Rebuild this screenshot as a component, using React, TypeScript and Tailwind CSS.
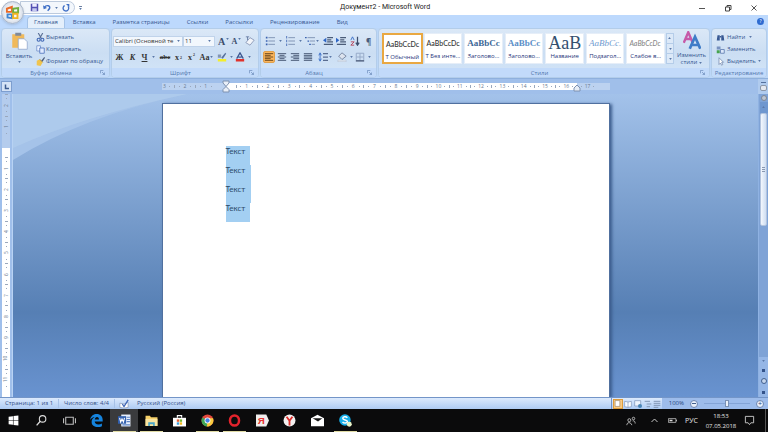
import type { ReactNode } from "react";

type Kids = { children?: ReactNode };

function Icon({ children, className = "h-3 w-3" }: Kids & { className?: string }) {
  return (
    <svg viewBox="0 0 12 12" className={`${className} shrink-0`} fill="none" aria-hidden="true">
      {children}
    </svg>
  );
}

function Caret() {
  return (
    <svg viewBox="0 0 4 3" className="h-[2px] w-[3px] shrink-0" aria-hidden="true">
      <path d="M0 0h4L2 3z" fill="#5a78a8" />
    </svg>
  );
}

function Tool({ label, children, className = "w-[13px]" }: Kids & { label: string; className?: string }) {
  return (
    <button aria-label={label} className={`flex h-3 shrink-0 items-center justify-center gap-px ${className}`}>
      {children}
    </button>
  );
}

function Group({ title, children, className, launcher = true }: Kids & { title: string; className: string; launcher?: boolean }) {
  return (
    <section
      className={`flex flex-col overflow-hidden rounded-sm border border-[#b3cdea] bg-linear-to-b from-[#dbe8f7] via-[#cbdef3] to-[#d3e5f8] ${className}`}
    >
      <div className="flex min-h-0 flex-1">{children}</div>
      <div className="flex h-[9px] items-center bg-[#c2dafa] text-[#5377ad]">
        <h2 className="flex-1 text-center leading-[8px]">{title}</h2>
        {launcher && (
          <button aria-label={`Параметры: ${title}`} className="mr-1 size-[5px]">
            <svg viewBox="0 0 6 6" className="size-[5px]" fill="none" stroke="#7594c0">
              <path d="M.5 4V.5H4M2.500 2.500l3 3M5.500 3v2.500H3" />
            </svg>
          </button>
        )}
      </div>
    </section>
  );
}

const lines = (rows: [number, number][], color = "#4b5c78") => (
  <path d={rows.map(([x, w], i) => `M${x} ${2 + i * 2}h${w}`).join("")} stroke={color} strokeWidth="1.200" />
);

const tabs = ["Вставка", "Разметка страницы", "Ссылки", "Рассылки", "Рецензирование", "Вид"];

const styles = [
  { name: "Т Обычный", sample: "AaBbCcDc", look: "text-[7px] text-[#333]" },
  { name: "Т Без инте...", sample: "AaBbCcDc", look: "text-[7px] text-[#333]" },
  { name: "Заголово...", sample: "AaBbCc", look: "text-[9px] font-bold text-[#3d6797]" },
  { name: "Заголово...", sample: "AaBbCc", look: "text-[9px] text-[#5b8fc8] font-bold" },
  { name: "Название", sample: "AaB", look: "text-[18px] text-[#34506f]" },
  { name: "Подзагол...", sample: "AaBbCc.", look: "text-[9px] italic text-[#6f9bd0]" },
  { name: "Слабое в...", sample: "AaBbCcDc", look: "text-[7px] italic text-[#8a8a8a]" },
];

function TitleBar() {
  return (
    <header className="relative flex h-[15px] items-center bg-white">
      <div className="ml-5 flex h-[13px] w-[55px] items-center gap-1 rounded-r-full border border-[#bccadd] bg-[#f3f7fc] pl-[9px]">
        <button aria-label="Сохранить">
          <Icon className="size-[9px]">
            <path d="M1 1h10v10H1z" fill="#5451b3" />
            <path d="M3 1h6v4H3z" fill="#eef" />
            <path d="M3 7h6v4H3z" fill="#c5c9ee" />
          </Icon>
        </button>
        <button aria-label="Отменить" className="flex items-center gap-1">
          <Icon className="size-2">
            <path d="M2 5c3-4 9-3 8 1-.4 2-2 3-3 4" stroke="#3f6fc6" strokeWidth="2.200" />
            <path d="M0 2l1 6 5-2z" fill="#3f6fc6" />
          </Icon>
          <Caret />
        </button>
        <button aria-label="Повторить">
          <Icon className="size-2">
            <path d="M4 2.500a4.200 4.200 0 1 0 5 1" stroke="#3f6fc6" strokeWidth="2" />
            <path d="M6 0h5v5z" fill="#3f6fc6" />
          </Icon>
        </button>
      </div>
      <button aria-label="Настройка панели" className="ml-1 flex flex-col items-center gap-px">
        <span className="h-px w-[3px] bg-[#6b7fa0]" />
        <Caret />
      </button>
      <h1 className="flex-1 pr-[8px] text-center font-[Roboto,sans-serif] text-[7px] font-normal text-[#222]">Документ2 - Microsoft Word</h1>
      <div className="flex items-center gap-[14px] pr-2">
        <button aria-label="Свернуть">
          <Icon className="size-3"><path d="M3 6.500h6" stroke="#555" /></Icon>
        </button>
        <button aria-label="Восстановить">
          <Icon className="size-3"><path d="M3.500 5h4v4h-4zM5 5V3.500h4v4H7.500" stroke="#444" /></Icon>
        </button>
        <button aria-label="Закрыть">
          <Icon className="size-3"><path d="M3.500 3.500l5 5M8.500 3.500l-5 5" stroke="#555" /></Icon>
        </button>
      </div>
      <button
        aria-label="Кнопка Office"
        className="absolute top-px left-px z-10 flex size-[23px] items-center justify-center rounded-full border border-[#a9b6c9] bg-radial from-white via-[#eceff4] to-[#b9c5d6] shadow"
      >
        <Icon className="size-[15px]">
          <path d="M1.500 3l4-1.500v4h-4z" stroke="#ea6a25" strokeWidth="1.500" />
          <path d="M6.500 3l4-.5v3.500h-4z" stroke="#6fae3c" strokeWidth="1.500" />
          <path d="M2 7.500h3.500v3L2 10z" stroke="#4186d0" strokeWidth="1.500" />
          <path d="M6.500 7h3.500v3.500H6.500z" stroke="#f0b322" strokeWidth="1.500" />
        </Icon>
      </button>
    </header>
  );
}

function TabRow() {
  return (
    <nav className="flex h-[13px] items-end bg-[#bdd9fd] pr-1 pl-[27px] text-[#355690]">
      <button className="h-3 rounded-t-sm border-x border-t border-[#a5c3e8] bg-[#e4effb] px-[6px]">Главная</button>
      <div className="flex flex-1 items-center gap-[17px] pl-2">
        {tabs.map((t) => (
          <button key={t} className="h-3">{t}</button>
        ))}
      </div>
      <button aria-label="Справка" className="mb-[3px] flex size-[7px] items-center justify-center rounded-full bg-[#2f6bd0] text-[5px] text-white">?</button>
    </nav>
  );
}

function Clipboard() {
  return (
    <Group title="Буфер обмена" className="w-[109px]">
      <button className="flex w-[34px] flex-col items-center pt-[3px]">
        <Icon className="size-[18px]">
          <path d="M1.500 1.500h8v9h-8z" fill="#f0b95a" />
          <path d="M3.500.500h4v2h-4z" fill="#7f8a9b" />
          <path d="M5.500 4.500h4l2 2v5h-6z" fill="#fff" stroke="#8ba3c9" strokeWidth=".5" />
        </Icon>
        <span className="mt-[2px] mb-px leading-[8px]">Вставить</span>
        <Caret />
      </button>
      <div className="flex flex-col pt-[2px]">
        <button className="flex h-3 items-center gap-px">
          <Icon className="size-[9px]">
            <path d="M3 0l4 7M9 0L5 7" stroke="#5a6f95" strokeWidth="1.500" />
            <circle cx="3.500" cy="9" r="2" stroke="#4168b5" strokeWidth="1.500" />
            <circle cx="8.500" cy="9" r="2" stroke="#4168b5" strokeWidth="1.500" />
          </Icon>
          Вырезать
        </button>
        <button className="flex h-3 items-center gap-px">
          <Icon className="size-[9px]">
            <path d="M1 1h5v7H1z" fill="#e9f1ff" stroke="#6b8cc8" />
            <path d="M5 4h6v7H5z" fill="#dfeaff" stroke="#4168b5" />
          </Icon>
          Копировать
        </button>
        <button className="flex h-3 items-center gap-px">
          <Icon className="size-[9px]">
            <path d="M7 5l4-5 1 1-3 5z" fill="#4d5d7b" />
            <path d="M1 5l4-2 4 4-3 5-5-1z" fill="#f0c44e" />
            <path d="M5 3l4 4" stroke="#7c6b3c" />
          </Icon>
          Формат по образцу
        </button>
      </div>
    </Group>
  );
}

function FontGroup() {
  return (
    <Group title="Шрифт" className="w-[148px]">
      <div className="flex flex-col gap-1 pt-[6px] pl-px">
        <div className="flex h-3 items-center">
          <div className="flex h-[11px] w-[70px] items-center border border-[#c0d3ea] bg-[#f2f7fd] pr-[2px]">
            <select aria-label="Шрифт" className="w-full min-w-0 appearance-none overflow-hidden pl-px text-[6px] leading-[9px] whitespace-nowrap text-[#333]">
              <option>Calibri (Основной те</option>
            </select>
            <Caret />
          </div>
          <div className="flex h-[11px] w-[32px] items-center border border-[#c0d3ea] bg-[#f2f7fd] pr-[3px]">
            <select aria-label="Размер шрифта" className="w-full min-w-0 appearance-none pl-px text-[6px] leading-[9px] text-[#333]">
              <option>11</option>
            </select>
            <Caret />
          </div>
          <Tool label="Увеличить размер" className="ml-[2px] w-[13px]">
            <span className="font-['Liberation_Serif',serif] text-[10px] font-bold text-[#3c4d6b]">A</span>
            <span className="mb-1"><Caret /></span>
          </Tool>
          <Tool label="Уменьшить размер">
            <span className="font-['Liberation_Serif',serif] text-[8px] font-bold text-[#3c4d6b]">A</span>
            <span className="mb-1"><Caret /></span>
          </Tool>
          <Tool label="Очистить формат" className="w-[14px]">
            <Icon className="size-[10px]">
              <path d="M1 8l5-6 5 3-5 6z" fill="#f3f5fa" stroke="#8493b3" />
              <path d="M1 1h4M3 1v4" stroke="#60769f" />
            </Icon>
          </Tool>
        </div>
        <div className="flex h-3 items-center font-['Liberation_Serif',serif] text-[8px] font-bold text-[#333]">
          <Tool label="Полужирный">Ж</Tool>
          <Tool label="Курсив"><i>К</i></Tool>
          <Tool label="Подчеркнутый" className="w-[19px]"><u>Ч</u><span className="pl-1"><Caret /></span></Tool>
          <Tool label="Зачеркнутый" className="w-[14px]"><s className="text-[7px]">abc</s></Tool>
          <Tool label="Подстрочный">x<sub className="text-[4px]">2</sub></Tool>
          <Tool label="Надстрочный">x<sup className="text-[4px]">2</sup></Tool>
          <Tool label="Регистр" className="w-[17px]">Aa<Caret /></Tool>
          <Tool label="Цвет выделения" className="w-[19px]">
            <Icon className="size-[10px]">
              <path d="M1 8.500h10v3H1z" fill="#f4ee2a" />
              <path d="M5 7l5-6 1 1-4 6z" fill="#56719d" />
              <path d="M1 3h4v4H1z" fill="#8296b5" />
            </Icon>
            <span className="pl-[2px]"><Caret /></span>
          </Tool>
          <Tool label="Цвет текста" className="w-[18px]">
            <Icon className="size-[10px]">
              <path d="M2 8L6 1l4 7M4 6h4" stroke="#3b5690" strokeWidth="1.500" />
              <path d="M1 8.500h10v3H1z" fill="#e0322c" />
            </Icon>
            <span className="pl-[2px]"><Caret /></span>
          </Tool>
        </div>
      </div>
    </Group>
  );
}

function Paragraph() {
  return (
    <Group title="Абзац" className="w-[117px]">
      <div className="flex flex-col gap-1 pt-[6px] pl-[2px]">
        <div className="flex h-3 items-center">
          <Tool label="Маркеры" className="w-[20px]">
            <Icon className="size-[10px]">
              <path d="M4 2h8M4 6h8M4 10h8" stroke="#7388ab" />
              <path d="M1 2h2M1 6h2M1 10h2" stroke="#3a62b0" strokeWidth="2" />
            </Icon>
            <span className="pl-[3px]"><Caret /></span>
          </Tool>
          <Tool label="Нумерация" className="w-[20px]">
            <Icon className="size-[10px]">
              <path d="M4 2h8M4 6h8M4 10h8" stroke="#7388ab" />
              <path d="M2 0v12" stroke="#3a62b0" strokeDasharray="3 1.500" />
            </Icon>
            <span className="pl-[3px]"><Caret /></span>
          </Tool>
          <Tool label="Многоуровневый список" className="w-[18px]">
            <Icon className="size-[10px]">
              <path d="M3 2h9M6 6h6M8 10h4" stroke="#7388ab" />
              <path d="M0 2h2M3 6h2M5 10h2" stroke="#3a62b0" strokeWidth="1.500" />
            </Icon>
            <Caret />
          </Tool>
          <Tool label="Уменьшить отступ">
            <Icon className="size-[10px]">
              <path d="M5 2h7M5 4.500h5M5 7h7M1 10h11" stroke="#4b5c78" strokeWidth="1.500" />
              <path d="M0 5l4-3v6z" fill="#2f66c4" />
            </Icon>
          </Tool>
          <Tool label="Увеличить отступ">
            <Icon className="size-[10px]">
              <path d="M5 2h7M5 4.500h5M5 7h7M1 10h11" stroke="#4b5c78" strokeWidth="1.500" />
              <path d="M4 5L0 2v6z" fill="#2f66c4" />
            </Icon>
          </Tool>
          <Tool label="Сортировка" className="w-[15px]">
            <Icon className="size-[10px]">
              <path d="M1 5l2-4 2 4" stroke="#2f66c4" />
              <path d="M1 7h4l-4 4h4" stroke="#b2364c" />
              <path d="M9 1v9M7 8l2 3 2-3" stroke="#3d4d6c" strokeWidth="1.500" />
            </Icon>
          </Tool>
          <Tool label="Непечатаемые знаки">
            <span className="text-[8px] font-bold text-[#4a5c80]">¶</span>
          </Tool>
        </div>
        <div className="flex h-3 items-center">
          <button aria-label="По левому краю" className="flex size-[12px] items-center justify-center rounded-xs border border-[#dfa04c] bg-[#fcb65d]">
            <Icon className="size-[10px]">{lines([[1, 10], [1, 7], [1, 10], [1, 7], [1, 10]], "#704c20")}</Icon>
          </button>
          <Tool label="По центру"><Icon className="size-[10px]">{lines([[1, 10], [3, 6], [1, 10], [3, 6], [1, 10]])}</Icon></Tool>
          <Tool label="По правому краю"><Icon className="size-[10px]">{lines([[1, 10], [4, 7], [1, 10], [4, 7], [1, 10]])}</Icon></Tool>
          <Tool label="По ширине"><Icon className="size-[10px]">{lines([[1, 10], [1, 10], [1, 10], [1, 10], [1, 10]])}</Icon></Tool>
          <Tool label="Интервал" className="w-[21px]">
            <Icon className="size-[10px]">
              <path d="M6 2h6M6 6h6M6 10h6" stroke="#5a6d90" strokeWidth="1.500" />
              <path d="M2.500 2v8M1 4l1.500-3L4 4M1 8l1.500 3L4 8" stroke="#2f66c4" />
            </Icon>
            <Caret />
          </Tool>
          <Tool label="Заливка" className="w-[19px]">
            <Icon className="size-[10px]">
              <path d="M2 5l4-4 5 4-5 4z" fill="#dce3ee" stroke="#6b7b98" />
              <path d="M1 10h10v1.500H1z" fill="#fff" stroke="#9aa8c0" strokeWidth=".5" />
            </Icon>
            <span className="pl-[2px]"><Caret /></span>
          </Tool>
          <Tool label="Границы" className="w-[18px]">
            <Icon className="size-[10px]">
              <path d="M1.500 1.500h9v8M1.500 1.500v8M6 2v8M2 6h8" stroke="#8fa2c2" />
              <path d="M1 10.500h10" stroke="#3d4d6c" strokeWidth="1.500" />
            </Icon>
            <span className="pl-[2px]"><Caret /></span>
          </Tool>
        </div>
      </div>
    </Group>
  );
}

function Gallery() {
  return (
    <Group title="Стили" className="min-w-0 flex-1">
      <div className="flex min-w-0 flex-1 items-start pt-1 pl-[3px]">
        {styles.map((s, i) => (
          <button
            key={i}
            className={`flex h-[31px] min-w-0 flex-1 flex-col items-center overflow-hidden bg-white whitespace-nowrap ${
              i === 0 ? "border-2 border-[#e9a842]" : "mx-px border border-[#e6eef8]"
            }`}
          >
            <span
              className={`flex h-[18px] w-full items-center overflow-hidden pl-[2px] ${
                i >= 2 && i <= 5 ? "font-['Liberation_Serif',serif]" : "font-[Lato,sans-serif]"
              } ${s.look}`}
            >
              {s.sample}
            </span>
            <span className="text-[6px] leading-[9px] text-[#26347a]">{s.name}</span>
          </button>
        ))}
        <div className="flex h-[31px] w-2 flex-col border border-[#b5cde9] bg-[#dce9f8]">
          <button aria-label="Вверх" className="flex flex-1 rotate-180 items-center justify-center"><Caret /></button>
          <button aria-label="Вниз" className="flex flex-1 items-center justify-center border-y border-[#b5cde9]"><Caret /></button>
          <button aria-label="Все стили" className="flex flex-1 items-center justify-center"><Caret /></button>
        </div>
      </div>
      <button className="flex w-[35px] flex-col items-center pt-[2px]">
        <Icon className="h-[19px] w-[18px]">
          <path d="M.5 7.500L3.500.500l3 7M1.500 5h4" stroke="#c65aa8" strokeWidth="1.600" />
          <path d="M4.500 11.500l3.500-8 3.500 8M6 9h4.500" stroke="#3f7cc8" strokeWidth="1.800" />
        </Icon>
        <span className="pt-[2px] leading-[7px]">Изменить</span>
        <span className="flex items-center gap-[2px] leading-[7px]">стили<Caret /></span>
      </button>
    </Group>
  );
}

function Editing() {
  return (
    <Group title="Редактирование" className="w-[56px]" launcher={false}>
      <div className="flex flex-col pt-[2px] pl-1">
        <button className="flex h-3 items-center gap-[2px]">
          <Icon className="size-[9px]">
            <path d="M1 10l1-7h3v7zM7 10V3h3l1 7z" fill="#395a94" />
            <path d="M5 5h2" stroke="#395a94" strokeWidth="2" />
          </Icon>
          Найти<span className="pl-[2px]"><Caret /></span>
        </button>
        <button className="flex h-3 items-center gap-[2px]">
          <Icon className="size-[9px]">
            <path d="M1 2h5v4H1z" fill="#7992c0" />
            <path d="M6 6h5v5H6z" fill="#dce8fb" stroke="#5372a8" />
            <path d="M1 7h4v4H1z" fill="#46a34e" />
          </Icon>
          Заменить
        </button>
        <button className="flex h-3 items-center gap-[2px]">
          <Icon className="size-[9px]">
            <path d="M4 1v9l2-2 1.500 3 1.500-1-1.500-3H10z" fill="#fff" stroke="#7085ac" />
          </Icon>
          Выделить<Caret />
        </button>
      </div>
    </Group>
  );
}

function Tick({ n, vertical = false }: { n?: number; vertical?: boolean }) {
  return (
    <span className={`flex flex-1 items-center justify-between text-[5px] leading-[5px] text-[#68788f] ${vertical ? "flex-col" : ""}`}>
      <i className={vertical ? "h-px w-[3px] bg-[#9aa8bd]" : "h-[3px] w-px bg-[#9aa8bd]"} />
      <i className="size-px bg-[#9aa8bd]" />
      <span className={vertical ? "-rotate-90" : ""}>{n}</span>
      <i className="size-px bg-[#9aa8bd]" />
      <i />
    </span>
  );
}

function Ruler() {
  return (
    <div className="flex h-[15px] items-center bg-[#a0bfea]">
      <div className="flex h-[15px] w-[13px] items-center justify-center">
        <button aria-label="Табуляция" className="flex size-[11px] items-center justify-center border border-[#7d9ecf] bg-[#d5e3f6]">
          <Icon className="size-[6px]"><path d="M3 1v8h7" stroke="#3d5c90" strokeWidth="3" /></Icon>
        </button>
      </div>
      <div className="flex flex-1 justify-center">
        <div className="flex h-[7px] w-[448px]">
          <div className="flex w-[64px] justify-end overflow-hidden bg-[#bcd2f0] pr-[10px]">
            <div className="flex w-[62px] shrink-0">
              {[3, 2, 1].map((n) => <Tick key={n} n={n} />)}
            </div>
          </div>
          <div className="relative flex w-[351px] bg-white pl-[10px]">
            {Array.from({ length: 16 }, (_, i) => <Tick key={i} n={i + 1} />)}
            <svg viewBox="0 0 8 12" className="absolute -top-[3px] -left-1 h-[13px] w-2" fill="#e8eef7" stroke="#7f92b0" aria-hidden="true">
              <path d="M1 .5h6v2L4 6 1 2.500zM4 6l3 3v2.500H1V9z" />
            </svg>
            <svg viewBox="0 0 8 7" className="absolute top-[1px] -right-1 h-[8px] w-2" fill="#e8eef7" stroke="#7f92b0" aria-hidden="true">
              <path d="M4 .5l3 3v3H1v-3z" />
            </svg>
          </div>
          <div className="flex flex-1 bg-[#bcd2f0] pr-[12px]">
            <Tick n={17} />
          </div>
        </div>
      </div>
      <div className="flex h-[15px] w-[10px] flex-col items-center justify-end gap-[2px] bg-[#b0cbee]">
        <i className="h-px w-[5px] bg-[#54709c]" />
        <button aria-label="Линейка" className="h-[6px] w-[7px] rounded-xs border border-[#8b97a9] bg-[#e4e8ef]" />
        <i className="h-px" />
      </div>
    </div>
  );
}

const textRows = ["w-6", "w-[25px]", "w-[25px]", "w-6"];

function Workspace() {
  return (
    <main className="relative flex min-h-0 flex-1 overflow-hidden bg-linear-to-b from-[#a3c2ea] via-[#567fb4] via-72% to-[#6993d0]">
      <svg viewBox="0 0 190 66" className="absolute top-0 left-[13px] h-[66px] w-[190px]" aria-hidden="true">
        <path d="M0 0h174Q70 22 0 66z" fill="#a5c3e9" />
        <path d="M0 0h174Q70 22 0 54z" fill="#b0ccec" fillOpacity=".75" />
      </svg>
      <div className="relative flex w-[13px] justify-center border-r border-[#b8d2f3] bg-[#9fbfeb]">
        <div className="flex w-2 flex-col">
          <div className="flex h-[54px] flex-col bg-[#b4cced] pb-[11px]">
            {[2, 1].map((n) => <Tick key={n} n={n} vertical />)}
          </div>
          <div className="flex flex-1 flex-col bg-white pt-[9px] pb-[7px]">
            {Array.from({ length: 11 }, (_, i) => <Tick key={i} n={i + 1} vertical />)}
          </div>
        </div>
      </div>
      <div className="relative flex min-w-0 flex-1 justify-center pt-[9px]">
        <article className="w-[448px] border border-b-0 border-[#50709f] bg-white px-[63px] pt-[42px] font-[Lato,sans-serif] text-[8px] leading-[11px] font-normal text-[#2b4a68] shadow-[2px_1px_3px_#3b5c8c]">
          {textRows.map((w, i) => (
            <p key={i} className={`h-[19px] bg-[#a3cff2] ${w}`}>Текст</p>
          ))}
        </article>
      </div>
      <div className="relative flex w-[10px] flex-col items-center border-l border-[#8fb2e2] bg-[#7fa3d6]">
        <button aria-label="Выбор объекта" className="my-[1px] size-[6px] shrink-0 rounded-full border border-[#7d8796] bg-[#bdc5d0]" />
        <button aria-label="Прокрутка вверх" className="flex h-[11px] w-2 shrink-0 rotate-180 items-center justify-center bg-[#6f97cf]"><Caret /></button>
        <div className="flex h-[113px] w-[7px] shrink-0 flex-col items-center justify-center gap-px rounded-xs border border-[#b3c4de] bg-linear-to-r from-[#f3f7fd] to-[#cfdef2]">
          <i className="h-px w-[3px] bg-[#8a98b0]" />
          <i className="h-px w-[3px] bg-[#8a98b0]" />
          <i className="h-px w-[3px] bg-[#8a98b0]" />
        </div>
        <div className="flex-1" />
        <div className="flex h-10 w-full flex-col items-center justify-between bg-[#95b6e6] py-[3px]">
          <button aria-label="Прокрутка вниз"><Caret /></button>
          <button aria-label="Предыдущая страница" className="h-[3px] w-[3px] bg-[#34538a]" />
          <button aria-label="Объект перехода" className="size-[6px] rounded-full border border-[#42608f] bg-[#c5d5ec]" />
          <button aria-label="Следующая страница" className="h-[3px] w-[3px] bg-[#34538a]" />
        </div>
      </div>
    </main>
  );
}

function StatusBar() {
  return (
    <footer className="flex h-3 items-center border-t border-[#7395c8] bg-linear-to-b from-[#dceafd] to-[#aecbf3] text-[#355088]">
      <span className="w-[59px] border-r border-[#a7c2e8] pl-[5px] leading-[9px]">Страница: 1 из 1</span>
      <span className="w-[56px] border-r border-[#a7c2e8] pl-[5px] leading-[9px]">Число слов: 4/4</span>
      <button aria-label="Правописание" className="pr-2 pl-1">
        <Icon className="size-[10px]">
          <path d="M1 5l5 1 5-2v6l-5 1-5-1z" fill="#fff" stroke="#90a3c2" />
          <path d="M4 6l2 3 5-8" stroke="#3f67b8" strokeWidth="1.500" />
        </Icon>
      </button>
      <span className="flex-1 leading-[9px]">Русский (Россия)</span>
      <div className="flex h-full w-[51px] items-center justify-around border-l border-[#7395c8]">
        <button aria-label="Разметка страницы" className="flex size-[10px] items-center justify-center border border-[#dd9c3d] bg-[#fbca80]">
          <Icon className="size-[7px]"><path d="M2 1h8v10H2z" fill="#fff" stroke="#8b7a62" /></Icon>
        </button>
        <button aria-label="Режим чтения"><Icon className="size-2"><path d="M1 2l5 1 5-1v8l-5 1-5-1zM6 3v8" fill="#fff" stroke="#7890b5" /></Icon></button>
        <button aria-label="Веб-документ"><Icon className="size-2"><path d="M1 1h9v8H1z" fill="#eef4fd" stroke="#7890b5" /><circle cx="9" cy="9" r="3" fill="#4a86b8" /></Icon></button>
        <button aria-label="Структура"><Icon className="size-2"><path d="M1 2h8M4 6h7M4 10h5" stroke="#8397b6" strokeWidth="1.500" /></Icon></button>
        <button aria-label="Черновик"><Icon className="size-2"><path d="M1 2h10M1 5h10M1 8h10M1 11h7" stroke="#8397b6" strokeWidth="1.500" /></Icon></button>
      </div>
      <div className="flex h-full items-center gap-[6px] bg-[#9dbceb] px-1 text-[#27457d]">
        <button className="w-[18px] text-right">100%</button>
        <button aria-label="Мельче" className="flex size-[8px] items-center justify-center rounded-full border border-[#6c86b3] bg-[#e8effa]"><i className="h-px w-1 bg-[#42608f]" /></button>
        <input
          type="range"
          aria-label="Масштаб"
          defaultValue={50}
          className="h-2 w-[46px] appearance-none bg-transparent [&::-webkit-slider-runnable-track]:h-px [&::-webkit-slider-runnable-track]:bg-[#84a4d6] [&::-webkit-slider-thumb]:-mt-[3px] [&::-webkit-slider-thumb]:h-[7px] [&::-webkit-slider-thumb]:w-1 [&::-webkit-slider-thumb]:appearance-none [&::-webkit-slider-thumb]:border [&::-webkit-slider-thumb]:border-[#7890b5] [&::-webkit-slider-thumb]:bg-[#eaf1fb]"
        />
        <button aria-label="Крупнее" className="flex size-[8px] items-center justify-center rounded-full border border-[#6c86b3] bg-[#e8effa] text-[7px] leading-none">+</button>
      </div>
    </footer>
  );
}

const apps: { name: string; open?: boolean; active?: boolean; art: ReactNode }[] = [
  { name: "Пуск", art: <path d="M1.500 2.500L5.500 2v3.700h-4zM6 1.900l4.500-.6v4.400H6zM1.500 6.200h4V10l-4-.5zM6 6.200h4.500v4.500L6 10.100z" fill="#fff" /> },
  { name: "Поиск", art: <><circle cx="7" cy="4.500" r="3" stroke="#ddd" /><path d="M5 6.500L1.500 10.500" stroke="#ddd" strokeWidth="1.200" /></> },
  { name: "Представление задач", art: <path d="M2.500 3h7v6.500h-7zM.5 4v4.500M11.500 4v4.500" stroke="#bbb" /> },
  {
    name: "Edge",
    art: <path d="M0 5.500C.8 1.500 3.500 0 6.200 0 9.500 0 11.700 2.300 11.700 5.600V7H4.300c.2 2 1.700 2.600 3.400 2.600 1.200 0 2.400-.4 3.300-.9v2.500c-1.100.6-2.400.8-3.700.8C4 12 1.500 10.300 1.500 7.300c0-2 1-3.500 2.800-4.500C2.600 3.100 1 4 0 5.500zM4.400 5H8.300c0-1.500-.6-2.300-1.800-2.300S4.700 3.600 4.400 5z" fill="#1583dd" fillRule="evenodd" />,
  },
  {
    name: "Word", open: true, active: true,
    art: <><path d="M3 .5h8.500v11H3z" fill="#e8f0fd" /><path d="M8 3h3M8 5h3M8 7h3M4 10h7" stroke="#5b82c4" /><path d="M0 2h7.500v7H0z" fill="#315fae" /><path d="M1.500 3.500l1 4L3.700 4.500 5 7.500l1-4" stroke="#fff" /></>,
  },
  { name: "Проводник", open: true, art: <><path d="M.5 1.500h4l1 1.500h6v8H.5z" fill="#f4cf67" /><path d="M.5 4.500h11v6.500H.5z" fill="#fae5a0" /><path d="M3 7.500h6V11H7.500V9.500h-3V11H3z" fill="#4aa5c8" /></> },
  { name: "Магазин", art: <><path d="M0 3.500h12v8H0z" fill="#fff" /><path d="M4 3.500v-2h4v2" stroke="#fff" /><path d="M3.500 5h2.200v2.200H3.500z" fill="#e55b35" /><path d="M6.200 5h2.200v2.200H6.200z" fill="#76b82f" /><path d="M3.500 7.700h2.200v2.200H3.500z" fill="#3a9fe0" /><path d="M6.200 7.700h2.200v2.200H6.200z" fill="#f5bb21" /></> },
  {
    name: "Chrome", open: true,
    art: <><circle cx="6" cy="6" r="5.500" fill="#e2483d" /><path d="M6 6L1.200 3.300A5.500 5.500 0 0 0 5.500 11.500z" fill="#3fa757" /><path d="M6 6l-.5 5.500A5.500 5.500 0 0 0 11.100 4H6z" fill="#f7cb3f" /><circle cx="6" cy="6" r="2.700" fill="#fff" /><circle cx="6" cy="6" r="2" fill="#4384ea" /></>,
  },
  { name: "Opera", open: true, art: <ellipse cx="6" cy="6" rx="4.200" ry="4.700" stroke="#e2232c" strokeWidth="2.300" /> },
  { name: "Яндекс", art: <><path d="M0 .5H9.500L12 6 9.500 11.500H0z" fill="#f0eeee" /><text x="1.700" y="9.500" fontSize="9" fontWeight="700" fontFamily="Liberation Sans" fill="#e5322c">Я</text></> },
  { name: "Яндекс Браузер", art: <><circle cx="6" cy="6" r="5.500" fill="#f4f1f1" /><path d="M3.300 2.500L6 6.200l2.700-3.700M6 6v4.500" stroke="#dc2e2b" strokeWidth="1.700" /></> },
  { name: "Почта", art: <><path d="M0 4L6 .8 12 4v7.200H0z" fill="#fff" /><path d="M1.500 4h9L6.500 7z" fill="#161616" /></> },
  {
    name: "Skype", open: true,
    art: <><circle cx="5.500" cy="5.500" r="5.300" fill="#17aee9" /><path d="M7.700 3.500C6.500 2 3.500 2.300 3.500 4c0 2 4.300 1 4.300 3 0 1.600-3.300 2-4.500.2" stroke="#fff" strokeWidth="1.400" /><circle cx="9.500" cy="9.500" r="2.300" fill="#e9f4c8" /></>,
  },
];

function Taskbar() {
  return (
    <nav className="flex h-[23px] items-stretch justify-between bg-[#0b0b0c] text-[#e4e4e4]">
      <div className="flex w-[359px]">
        {apps.map((a) => (
          <button
            key={a.name}
            aria-label={a.name}
            className={`flex flex-1 items-center justify-center ${a.active ? "bg-[#3a3b3d]" : ""}`}
          >
            <span className={`flex h-full w-[23px] items-center justify-center border-b ${a.open ? "border-[#e0dba4]" : "border-transparent"}`}>
              <Icon className="mt-px size-[13px]">{a.art}</Icon>
            </span>
          </button>
        ))}
      </div>
      <div className="flex items-center pr-[2px]">
        <button aria-label="Люди" className="mr-[14px]">
          <Icon className="size-[10px]"><circle cx="4" cy="5" r="1.800" stroke="#ccc" /><circle cx="9" cy="3" r="1.500" stroke="#ccc" /><path d="M1 11c0-4 5-4 6 0M8 6c2-1 3 1 3 3" stroke="#ccc" /></Icon>
        </button>
        <button aria-label="Скрытые значки" className="mr-[9px]">
          <Icon className="size-[9px]"><path d="M2 8l4-4 4 4" stroke="#ccc" strokeWidth="1.300" /></Icon>
        </button>
        <button aria-label="Батарея" className="mr-2">
          <Icon className="size-[9px]"><path d="M.5 3.500h10v5H.5z" stroke="#ccc" /><path d="M2 5h4v2H2zM11 5h1v2h-1z" fill="#ddd" /></Icon>
        </button>
        <button className="text-[7px]">РУС</button>
        <time className="w-[46px] pt-px text-center text-[6px] leading-[10px]">18:53<br />07.05.2018</time>
        <button aria-label="Уведомления" className="mr-[10px]">
          <Icon className="size-[11px]"><path d="M1.500 1.500h9v7h-3l-1.500 2-1.500-2h-3z" stroke="#ccc" /></Icon>
        </button>
        <i className="h-full w-px bg-[#555]" />
      </div>
    </nav>
  );
}

export default function App() {
  return (
    <div className="flex h-screen flex-col overflow-hidden font-['Open_Sans',sans-serif] text-[6px] leading-[9px] font-medium whitespace-nowrap text-[#355690]">
      <TitleBar />
      <TabRow />
      <div className="flex h-[51px] gap-px border-b border-[#8fb0dd] bg-[#bcd7f8] px-px">
        <Clipboard />
        <FontGroup />
        <Paragraph />
        <Gallery />
        <Editing />
      </div>
      <Ruler />
      <Workspace />
      <StatusBar />
      <Taskbar />
    </div>
  );
}
